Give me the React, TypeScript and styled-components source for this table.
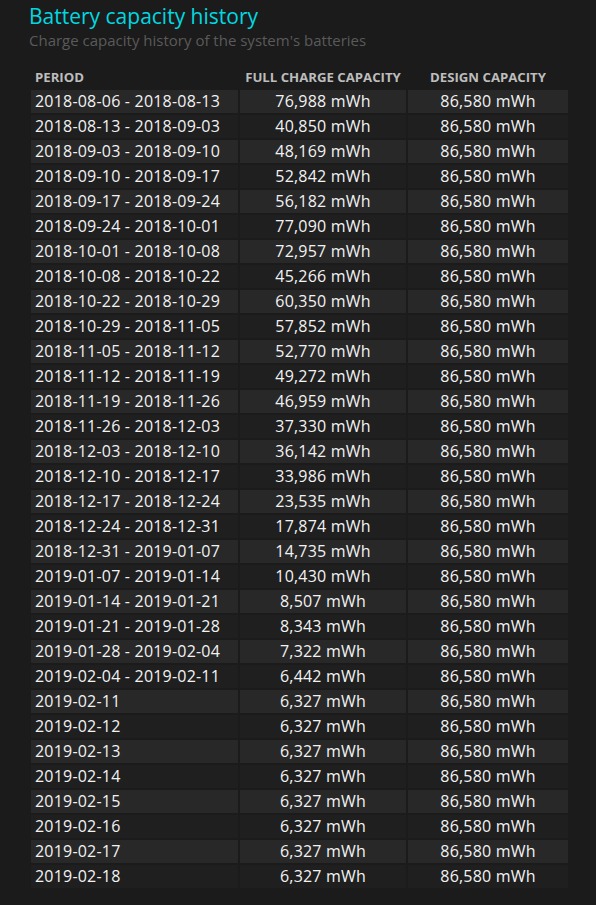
import React from "react";
import styled, { createGlobalStyle } from "styled-components";

type Row = {
	period: string;
	full: string;
	design: string;
};

const GlobalStyle = createGlobalStyle`
	html, body {
		margin: 0;
		padding: 0;
		background: #1b1b1b;
	}
	body {
		font-family: "Open Sans", "Noto Sans", sans-serif;
	}
`;

const Page = styled.div`
	padding: 3px 0 0 29px;
	min-height: 905px;
	box-sizing: border-box;
`;

const Title = styled.h1`
	margin: 0;
	font-size: 21px;
	font-weight: 400;
	line-height: 27px;
	color: #00d8e0;
`;

const Subtitle = styled.div`
	font-size: 15px;
	line-height: 20px;
	color: #5a5a5a;
	margin-bottom: 15px;
`;

const Table = styled.table`
	border-collapse: separate;
	border-spacing: 2px;
	table-layout: fixed;
`;

const HeadCell = styled.th<{ $width: number; $align?: "left" | "center" }>`
	width: ${(p) => p.$width}px;
	box-sizing: border-box;
	font-size: 13.2px;
	font-weight: 700;
	color: #bdbdbd;
	text-align: ${(p) => p.$align || "center"};
	padding: 0 4px;
	height: 21px;
	line-height: 21px;
	white-space: nowrap;
	vertical-align: middle;
`;

const Tr = styled.tr<{ $odd: boolean }>`
	background: ${(p) => (p.$odd ? "#282828" : "#1f1f1f")};
`;

const Cell = styled.td<{ $align?: "left" | "center" }>`
	height: 23px;
	padding: 0 4px;
	box-sizing: border-box;
	font-size: 16px;
	letter-spacing: 0.2px;
	line-height: 23px;
	color: #f2f2f2;
	text-align: ${(p) => p.$align || "center"};
	white-space: nowrap;
`;

const ranges = [
	["2018-08-06 - 2018-08-13", "76,988"],
	["2018-08-13 - 2018-09-03", "40,850"],
	["2018-09-03 - 2018-09-10", "48,169"],
	["2018-09-10 - 2018-09-17", "52,842"],
	["2018-09-17 - 2018-09-24", "56,182"],
	["2018-09-24 - 2018-10-01", "77,090"],
	["2018-10-01 - 2018-10-08", "72,957"],
	["2018-10-08 - 2018-10-22", "45,266"],
	["2018-10-22 - 2018-10-29", "60,350"],
	["2018-10-29 - 2018-11-05", "57,852"],
	["2018-11-05 - 2018-11-12", "52,770"],
	["2018-11-12 - 2018-11-19", "49,272"],
	["2018-11-19 - 2018-11-26", "46,959"],
	["2018-11-26 - 2018-12-03", "37,330"],
	["2018-12-03 - 2018-12-10", "36,142"],
	["2018-12-10 - 2018-12-17", "33,986"],
	["2018-12-17 - 2018-12-24", "23,535"],
	["2018-12-24 - 2018-12-31", "17,874"],
	["2018-12-31 - 2019-01-07", "14,735"],
	["2019-01-07 - 2019-01-14", "10,430"],
	["2019-01-14 - 2019-01-21", "8,507"],
	["2019-01-21 - 2019-01-28", "8,343"],
	["2019-01-28 - 2019-02-04", "7,322"],
	["2019-02-04 - 2019-02-11", "6,442"],
	["2019-02-11", "6,327"],
	["2019-02-12", "6,327"],
	["2019-02-13", "6,327"],
	["2019-02-14", "6,327"],
	["2019-02-15", "6,327"],
	["2019-02-16", "6,327"],
	["2019-02-17", "6,327"],
	["2019-02-18", "6,327"],
];

const rows: Row[] = ranges.map(([period, full]) => ({
	period,
	full: `${full} mWh`,
	design: "86,580 mWh",
}));

const App: React.FC = () => {
	return (
		<>
			<GlobalStyle />
			<Page>
				<Title>Battery capacity history</Title>
				<Subtitle>Charge capacity history of the system's batteries</Subtitle>
				<Table>
					<thead>
						<tr>
							<HeadCell $width={207} $align="left">
								PERIOD
							</HeadCell>
							<HeadCell $width={166}>FULL CHARGE CAPACITY</HeadCell>
							<HeadCell $width={160}>DESIGN CAPACITY</HeadCell>
						</tr>
					</thead>
					<tbody>
						{rows.map((r, i) => (
							<Tr key={r.period} $odd={i % 2 === 0}>
								<Cell $align="left">{r.period}</Cell>
								<Cell>{r.full}</Cell>
								<Cell>{r.design}</Cell>
							</Tr>
						))}
					</tbody>
				</Table>
			</Page>
		</>
	);
};

export default App;
